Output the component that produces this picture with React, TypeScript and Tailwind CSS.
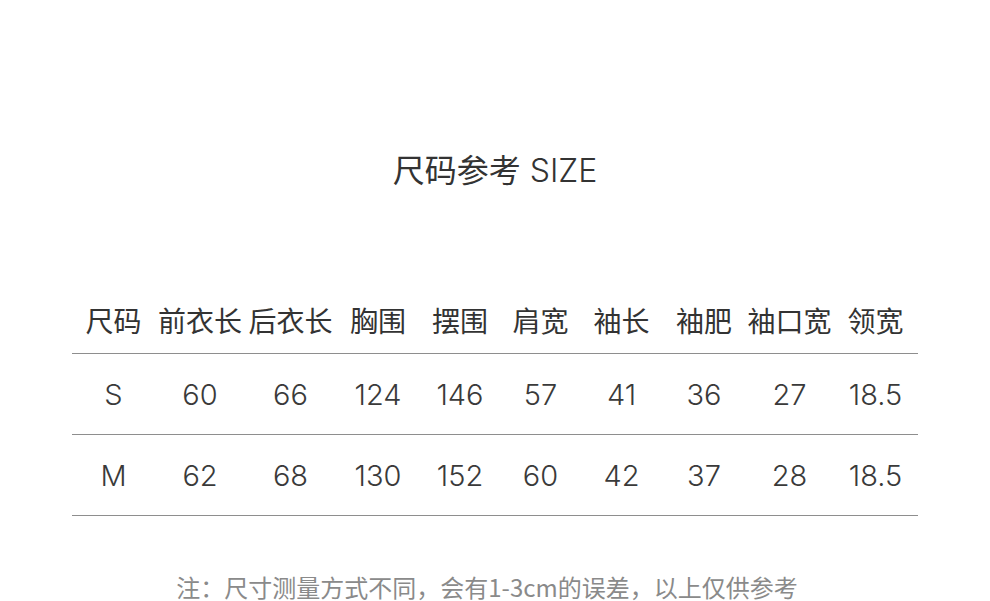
import React from "react";

const headers = ["尺码", "前衣长", "后衣长", "胸围", "摆围", "肩宽", "袖长", "袖肥", "袖口宽", "领宽"];
const rows = [
  ["S", "60", "66", "124", "146", "57", "41", "36", "27", "18.5"],
  ["M", "62", "68", "130", "152", "60", "42", "37", "28", "18.5"],
];

const grid = "grid grid-cols-[83px_90px_91px_84px_80px_81px_81px_84px_87px_85px] w-[846px] mx-auto border-b border-[#8e8e8e]";

export default function App() {
  return (
    <div className="w-full h-[601px] bg-white overflow-hidden flex flex-col" style={{ fontFamily: '"Noto Sans CJK SC", sans-serif' }}>
      <div className="pt-[148px] h-[190px] text-center text-[32px] leading-[40px] text-[#333] whitespace-nowrap">
        <span className="font-normal">尺码参考</span>
        <span className="font-light" style={{ fontFamily: 'Inter, "Noto Sans CJK SC", sans-serif' }}> SIZE</span>
      </div>
      <div className="mt-[98px]">
        <div className={grid + " h-[66px] items-center"}>
          {headers.map((h) => (
            <div key={h} className="text-center text-[28px] leading-[30px] text-[#333] whitespace-nowrap font-normal -mt-[1px]">
              {h}
            </div>
          ))}
        </div>
        {rows.map((r, i) => (
          <div key={i} className={grid + " h-[81px] items-center"}>
            {r.map((c, j) => (
              <div
                key={j}
                className="text-center text-[29px] leading-[30px] text-[#3a3a3a] font-light pt-[2px]"
                style={{ fontFamily: 'Inter, "Liberation Sans", sans-serif' }}
              >
                {c}
              </div>
            ))}
          </div>
        ))}
      </div>
      <div className="mt-[58px] pr-[16px] text-center text-[24px] leading-[26px] text-[#8a8a8a] whitespace-nowrap">
        注：尺寸测量方式不同，会有1-3cm的误差，以上仅供参考
      </div>
    </div>
  );
}
